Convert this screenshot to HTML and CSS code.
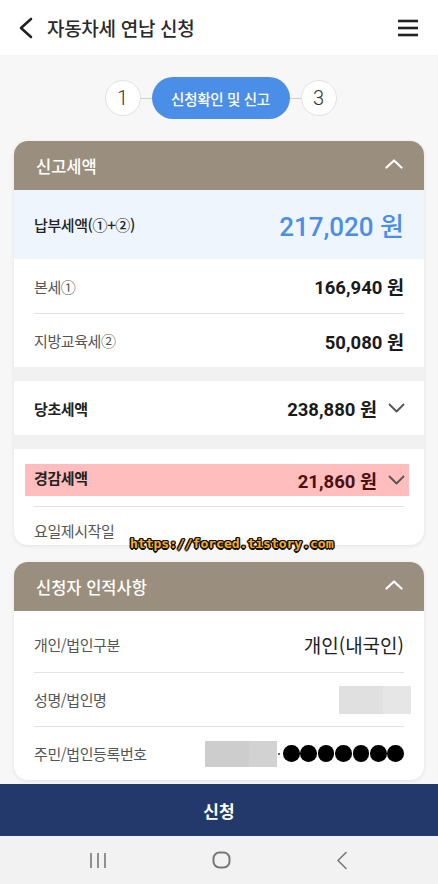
FILE: index.html
```html
<!DOCTYPE html>
<html lang="ko">
<head>
<meta charset="utf-8">
<title>자동차세 연납 신청</title>
<link rel="stylesheet" href="styles.css">
</head>
<body>
<div class="screen">
  <header class="topbar">
    <div class="topbar-left">
      <svg class="back" width="16" height="22" viewBox="0 0 16 22"><polyline points="13,2 3,11 13,20" fill="none" stroke="#222" stroke-width="2.6" stroke-linecap="round" stroke-linejoin="round"/></svg>
      <h1 class="title">자동차세 연납 신청</h1>
    </div>
    <svg class="menu" width="22" height="18" viewBox="0 0 22 18"><g stroke="#222" stroke-width="2.6"><line x1="1" y1="2" x2="21" y2="2"/><line x1="1" y1="9" x2="21" y2="9"/><line x1="1" y1="16" x2="21" y2="16"/></g></svg>
  </header>

  <main class="content">
    <div class="steps">
      <span class="step-circle">1</span>
      <span class="step-line"></span>
      <span class="step-pill">신청확인 및 신고</span>
      <span class="step-line"></span>
      <span class="step-circle">3</span>
    </div>

    <section class="card">
      <div class="card-head">
        <span>신고세액</span>
        <svg width="18" height="10" viewBox="0 0 18 10"><polyline points="1.5,8.5 9,1.5 16.5,8.5" fill="none" stroke="#fff" stroke-width="2.2" stroke-linecap="round" stroke-linejoin="round"/></svg>
      </div>
      <div class="row total">
        <span class="label strong">납부세액(①+②)</span>
        <span class="amt-big">217,020 원</span>
      </div>
      <div class="group">
        <div class="row">
          <span class="label">본세①</span>
          <span class="amt">166,940 원</span>
        </div>
        <div class="row">
          <span class="label">지방교육세②</span>
          <span class="amt">50,080 원</span>
        </div>
      </div>
      <div class="band"></div>
      <div class="group">
        <div class="row">
          <span class="label strong bold">당초세액</span>
          <span class="amt-wrap"><span class="amt">238,880 원</span>
            <svg class="chev" width="17" height="10" viewBox="0 0 17 10"><polyline points="1.5,1.5 8.5,8.5 15.5,1.5" fill="none" stroke="#555" stroke-width="1.8" stroke-linecap="round" stroke-linejoin="round"/></svg>
          </span>
        </div>
      </div>
      <div class="band"></div>
      <div class="group reduce">
        <div class="row pink">
          <span class="label strong bold raised">경감세액</span>
          <span class="amt-wrap"><span class="amt dark-red">21,860 원</span>
            <svg class="chev" width="17" height="10" viewBox="0 0 17 10"><polyline points="1.5,1.5 8.5,8.5 15.5,1.5" fill="none" stroke="#555" stroke-width="1.8" stroke-linecap="round" stroke-linejoin="round"/></svg>
          </span>
        </div>
        <div class="row last">
          <span class="label">요일제시작일</span>
        </div>
      </div>
    </section>

    <section class="card card-two">
      <div class="card-head">
        <span>신청자 인적사항</span>
        <svg width="18" height="10" viewBox="0 0 18 10"><polyline points="1.5,8.5 9,1.5 16.5,8.5" fill="none" stroke="#fff" stroke-width="2.2" stroke-linecap="round" stroke-linejoin="round"/></svg>
      </div>
      <div class="group first-pad">
        <div class="row">
          <span class="label">개인/법인구분</span>
          <span class="value">개인(내국인)</span>
        </div>
        <div class="row">
          <span class="label">성명/법인명</span>
          <span class="mask mask-name"><span></span><span></span></span>
        </div>
        <div class="row">
          <span class="label">주민/법인등록번호</span>
          <span class="idnum"><span class="mask mask-id"><span></span><span></span></span><span class="dot"></span><span class="dots"><i></i><i></i><i></i><i></i><i></i><i></i><i></i></span></span>
        </div>
      </div>
    </section>

    <div class="watermark">https://forced.tistory.com</div>
  </main>

  <button class="submit" type="button">신청</button>

  <nav class="navbar">
    <svg width="18" height="17" viewBox="0 0 18 17"><g stroke="#777" stroke-width="1.6"><line x1="2" y1="1" x2="2" y2="16"/><line x1="9" y1="1" x2="9" y2="16"/><line x1="16" y1="1" x2="16" y2="16"/></g></svg>
    <svg width="20" height="18" viewBox="0 0 20 18"><rect x="1.5" y="1.5" width="16" height="15" rx="6" fill="none" stroke="#777" stroke-width="2"/></svg>
    <svg width="12" height="19" viewBox="0 0 12 19"><polyline points="10,1.5 2,9.5 10,17.5" fill="none" stroke="#777" stroke-width="1.6" stroke-linecap="round" stroke-linejoin="round"/></svg>
  </nav>
</div>
</body>
</html>
```

FILE: styles.css
```css
* { box-sizing: border-box; }
html, body { margin: 0; padding: 0; }
body {
  width: 438px;
  height: 884px;
  overflow: hidden;
  font-family: "Roboto", "Noto Sans CJK KR", sans-serif;
  color: #222;
  background: #f7f7f7;
}
.screen {
  position: relative;
  display: flex;
  flex-direction: column;
  height: 884px;
}
.topbar {
  height: 55px;
  flex: 0 0 55px;
  background: #fff;
  display: flex;
  align-items: center;
  justify-content: space-between;
  padding: 0 19px 0 18px;
}
.topbar-left { display: flex; align-items: center; }
.back { margin-right: 13px; }
.title {
  margin: 0;
  font-family: "Noto Sans CJK KR", sans-serif;
  font-size: 19px;
  font-weight: 500;
  color: #2a2a2a;
  letter-spacing: -0.3px;
}
.menu { margin-top: 1px; }

.content {
  flex: 1 1 auto;
  overflow: hidden;
  position: relative;
  padding-top: 22px;
}
.steps {
  display: flex;
  align-items: center;
  justify-content: center;
  height: 42px;
  padding-left: 3px;
}
.step-circle {
  width: 36px;
  height: 36px;
  border-radius: 50%;
  background: #fff;
  border: 1px solid #e2e2e2;
  display: flex;
  align-items: center;
  justify-content: center;
  font-size: 20px;
  font-weight: 300;
  color: #333;
}
.step-line {
  width: 11px;
  height: 1px;
  background: #cfcfcf;
}
.step-pill {
  width: 138px;
  height: 42px;
  border-radius: 21px;
  background: #4a8ee8;
  color: #fff;
  display: flex;
  align-items: center;
  justify-content: center;
  font-family: "Noto Sans CJK KR", sans-serif;
  font-size: 14.5px;
  font-weight: 500;
  letter-spacing: -0.3px;
}

.card {
  margin: 22px 14px 0;
  background: #fff;
  border-radius: 14px;
  overflow: hidden;
  box-shadow: 0 1px 4px rgba(0,0,0,0.09);
}
.card-two { margin-top: 17px; }
.card-head {
  height: 49px;
  background: #9a8f7e;
  color: #fff;
  display: flex;
  align-items: center;
  justify-content: space-between;
  padding: 0 21px 0 22px;
  font-family: "Noto Sans CJK KR", sans-serif;
  font-size: 16.5px;
  font-weight: 500;
}
.card-head svg { margin-top: -4px; }

.row {
  display: flex;
  align-items: center;
  justify-content: space-between;
  height: 54px;
}
.row + .row { border-top: 1px solid #e3e3e3; }
.total {
  height: 69px;
  background: #eef5fd;
  padding: 0 20px;
}
.group { padding: 0 20px; }
.label {
  font-family: "Noto Sans CJK KR", sans-serif;
  font-size: 15px;
  color: #555;
  letter-spacing: -0.4px;
}
.label.strong { color: #222; font-weight: 500; }
.label.bold { font-weight: 700; }
.amt-big {
  font-family: "Roboto", "Noto Sans CJK KR", sans-serif;
  font-size: 26px;
  font-weight: 500;
  color: #4a8ee8;
}
.amt {
  font-family: "Roboto", "Noto Sans CJK KR", sans-serif;
  font-size: 18.5px;
  font-weight: 700;
  color: #1a1a1a;
}
.amt.dark-red { color: #4a1010; }
.amt-wrap { display: flex; align-items: center; }
.chev { margin-left: 11px; margin-right: -1px; }
.band { height: 14px; background: #f1f1f1; }

.reduce { padding-top: 15px; }
.pink {
  height: 32px;
  background: #ffbdbd;
  margin: 0 -5px 0 -9px;
  padding: 0 5px 0 9px;
}
.raised { margin-top: -5px; }
.reduce .row.last {
  height: 39px;
  margin-top: 10px;
  align-items: flex-start;
  padding-top: 14px;
  line-height: 20px;
}

.first-pad { padding-top: 6px; }
.first-pad .row:first-child { height: 55px; }
.value {
  font-family: "Noto Sans CJK KR", sans-serif;
  font-size: 19px;
  color: #222;
}
.mask { display: flex; }
.mask-name { margin-right: -7px; height: 28px; }
.mask-name span:first-child { width: 44px; background: #e0e0e0; }
.mask-name span:last-child { width: 28px; background: #e6e6e6; }
.idnum { display: flex; align-items: center; }
.mask-id { height: 26px; }
.mask-id span:first-child { width: 44px; background: #cdcdcd; }
.mask-id span:last-child { width: 28px; background: #d2d2d2; }
.dot {
  width: 2px;
  height: 2px;
  border-radius: 50%;
  background: #333;
  margin: 0 3px 0 1px;
}
.dots { display: flex; gap: 0.8px; }
.dots i {
  display: block;
  width: 16.6px;
  height: 16.6px;
  border-radius: 50%;
  background: #000;
}

.watermark {
  position: absolute;
  left: 130px;
  top: 481px;
  font-family: "DejaVu Sans Mono", monospace;
  font-weight: 700;
  font-size: 13px;
  color: #f9a825;
  text-shadow: -1.5px 0 #111, 1.5px 0 #111, 0 -1.5px #111, 0 1.5px #111, -1px -1px #111, 1px 1px #111, -1px 1px #111, 1px -1px #111;
}

.submit {
  flex: 0 0 52px;
  height: 52px;
  border: 0;
  margin: 0;
  background: #23396b;
  color: #fff;
  font-family: "Noto Sans CJK KR", sans-serif;
  font-size: 17px;
  font-weight: 700;
}
.navbar {
  flex: 0 0 48px;
  height: 48px;
  background: #f2f2f2;
  display: flex;
  align-items: center;
  justify-content: space-between;
  padding: 0 90px 0 89px;
}
```
